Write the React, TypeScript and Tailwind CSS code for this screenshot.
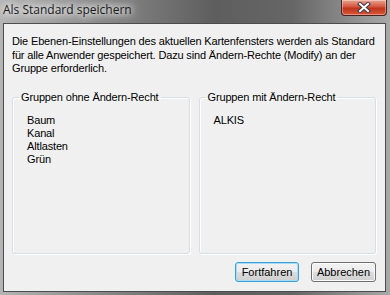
import React from "react";

const left = ["Baum", "Kanal", "Altlasten", "Grün"];
const right = ["ALKIS"];

function GroupBox({ title, items }: { title: string; items: string[] }) {
  return (
    <fieldset className="flex-1 h-[163px] rounded-[3px] border border-[#d5dfe5] shadow-[inset_1px_1px_0_#fff,1px_1px_0_#fff] px-[6px]">
      <legend className="px-[2px] leading-[13px]">{title}</legend>
      <div className="pt-[10px] pl-[8px] flex flex-col">
        {items.map((it) => (
          <span key={it} className="leading-[13px]">
            {it}
          </span>
        ))}
      </div>
    </fieldset>
  );
}

export default function App() {
  return (
    <div className="w-[390px] h-[295px] flex flex-col bg-[linear-gradient(90deg,#b4b4b4_0%,#8a8a8a_25%,#5e5e5e_55%,#666_75%,#a8a8a8_100%)] font-['Liberation_Sans',Arial,sans-serif] text-[11px] tracking-[-0.15px] text-black overflow-hidden">
      {/* title bar */}
      <div className="relative h-[23px] shrink-0">
        <span className="absolute left-[3px] top-[2px] font-['Open_Sans',sans-serif] text-[12px] tracking-normal leading-[16px] text-[#1a1a1a] [text-shadow:0_0_6px_#fff,0_0_10px_#fff,0_0_14px_#fff]">
          Als Standard speichern
        </span>
        <div className="absolute left-[341px] top-0 w-[46px] h-[16px] rounded-b-[4px] border border-t-0 border-[#4a2020] bg-[linear-gradient(180deg,#e8a593_0%,#d5543c_45%,#c0341b_55%,#d9583b_100%)] shadow-[inset_0_0_0_1px_rgba(255,255,255,0.35)] flex items-center justify-center">
          <svg width="14" height="11" viewBox="0 0 14 11">
            <path d="M3 2 L11 9 M11 2 L3 9" stroke="#3a3a4a" strokeWidth="4" strokeLinecap="square" />
            <path d="M3 2 L11 9 M11 2 L3 9" stroke="#fff" strokeWidth="2" strokeLinecap="square" />
          </svg>
        </div>
      </div>

      {/* client area */}
      <div className="ml-[3px] mr-[4px] mb-[3px] flex-1 border border-[#4c4c4c] bg-[#f0f0f0] flex flex-col pt-[11px] pl-[8px] pr-[8px]">
        <p className="leading-[13.5px] -mr-[4px]">
          Die Ebenen-Einstellungen des aktuellen Kartenfensters werden als Standard für alle Anwender gespeichert. Dazu sind Ändern-Rechte (Modify) an der Gruppe erforderlich.
        </p>

        <div className="flex gap-[9px] mt-[15px] pr-[1px]">
          <GroupBox title="Gruppen ohne Ändern-Recht" items={left} />
          <GroupBox title="Gruppen mit Ändern-Recht" items={right} />
        </div>

        <div className="flex justify-end gap-[12px] mt-[8px] pr-[1px] tracking-normal">
          <button className="w-[64px] h-[20px] rounded-[3px] border border-[#3c9fdb] bg-[linear-gradient(180deg,#f2f2f2_0%,#ebebeb_50%,#dddddd_51%,#cfcfcf_100%)] shadow-[inset_0_0_0_1px_#a8dcf6] leading-[18px]">
            Fortfahren
          </button>
          <button className="w-[65px] h-[20px] rounded-[3px] border border-[#707070] bg-[linear-gradient(180deg,#f2f2f2_0%,#ebebeb_50%,#dddddd_51%,#cfcfcf_100%)] shadow-[inset_0_0_0_1px_#fcfcfc] leading-[18px]">
            Abbrechen
          </button>
        </div>
      </div>
    </div>
  );
}
